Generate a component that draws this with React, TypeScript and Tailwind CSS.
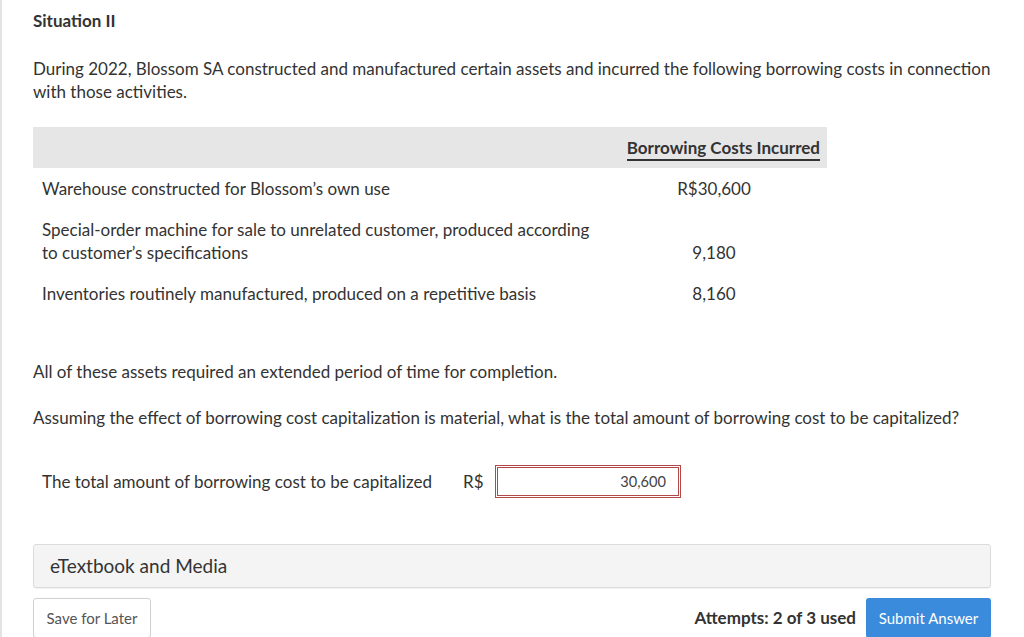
import React from "react";

const rows = [
  { label: "Warehouse constructed for Blossom’s own use", value: "R$30,600" },
  {
    label: "Special-order machine for sale to unrelated customer, produced according to customer’s specifications",
    value: "9,180",
  },
  { label: "Inventories routinely manufactured, produced on a repetitive basis", value: "8,160" },
];

export default function App() {
  return (
    <div className="h-[637px] overflow-hidden border-l-2 border-[#e3e3e3] bg-white font-['Lato','Noto_Sans',sans-serif] text-[#333]">
      <div className="pl-[31px] pr-[33px] pt-[10px]">
        <h2 className="text-[17px] font-bold leading-[22px]">Situation II</h2>

        <p className="mt-[25px] text-[17px] leading-[23px]">
          During 2022, Blossom SA constructed and manufactured certain assets and incurred the following borrowing
          costs in connection with those activities.
        </p>

        <table className="mt-[24px] w-[794px] border-collapse text-[17px]">
          <thead>
            <tr className="bg-[#e6e6e6]">
              <th className="h-[41px]" />
              <th className="w-[232px] pr-[7px] text-right align-middle font-bold">
                <span className="border-b-2 border-[#333] pb-[1px] leading-[20px]">Borrowing Costs Incurred</span>
              </th>
            </tr>
          </thead>
          <tbody>
            {rows.map((row) => (
              <tr key={row.value}>
                <td className="w-[562px] pl-[9px] pt-[9px] pb-[9px] align-bottom leading-[23px]">{row.label}</td>
                <td className="pb-[9px] pl-[6px] text-center align-bottom leading-[23px]">{row.value}</td>
              </tr>
            ))}
          </tbody>
        </table>

        <p className="mt-[46px] text-[17px] leading-[23px]">All of these assets required an extended period of time for completion.</p>
        <p className="mt-[23px] text-[17px] leading-[23px]">
          Assuming the effect of borrowing cost capitalization is material, what is the total amount of borrowing cost
          to be capitalized?
        </p>

        <div className="mt-[36px] flex items-center pl-[9px] text-[17px]">
          <span className="w-[421px]">The total amount of borrowing cost to be capitalized</span>
          <span className="w-[32px]">R$</span>
          <div className="flex h-[33px] w-[186px] items-center justify-end border-[3px] border-double border-[#b24848] pr-[12px] text-[14.6px] text-[#444]">
            30,600
          </div>
        </div>

        <div className="mt-[46px] flex h-[44px] items-center rounded-[3px] border border-[#dcdcdc] bg-[#f4f4f4] pl-[16px] text-[19px] shadow-[0_1px_1px_rgba(0,0,0,0.06)]">
          eTextbook and Media
        </div>

        <div className="mt-[10px] flex items-start justify-between">
          <button
            type="button"
            className="h-[40px] w-[118px] rounded-[3px] border border-[#cfcfcf] bg-white text-[15px] text-[#555]"
          >
            Save for Later
          </button>
          <div className="flex items-center gap-[10px]">
            <span className="text-[17px] font-bold">Attempts: 2 of 3 used</span>
            <button
              type="button"
              className="h-[40px] w-[125px] rounded-[3px] bg-[#3a8bdb] text-[15px] text-white"
            >
              Submit Answer
            </button>
          </div>
        </div>
      </div>
    </div>
  );
}
